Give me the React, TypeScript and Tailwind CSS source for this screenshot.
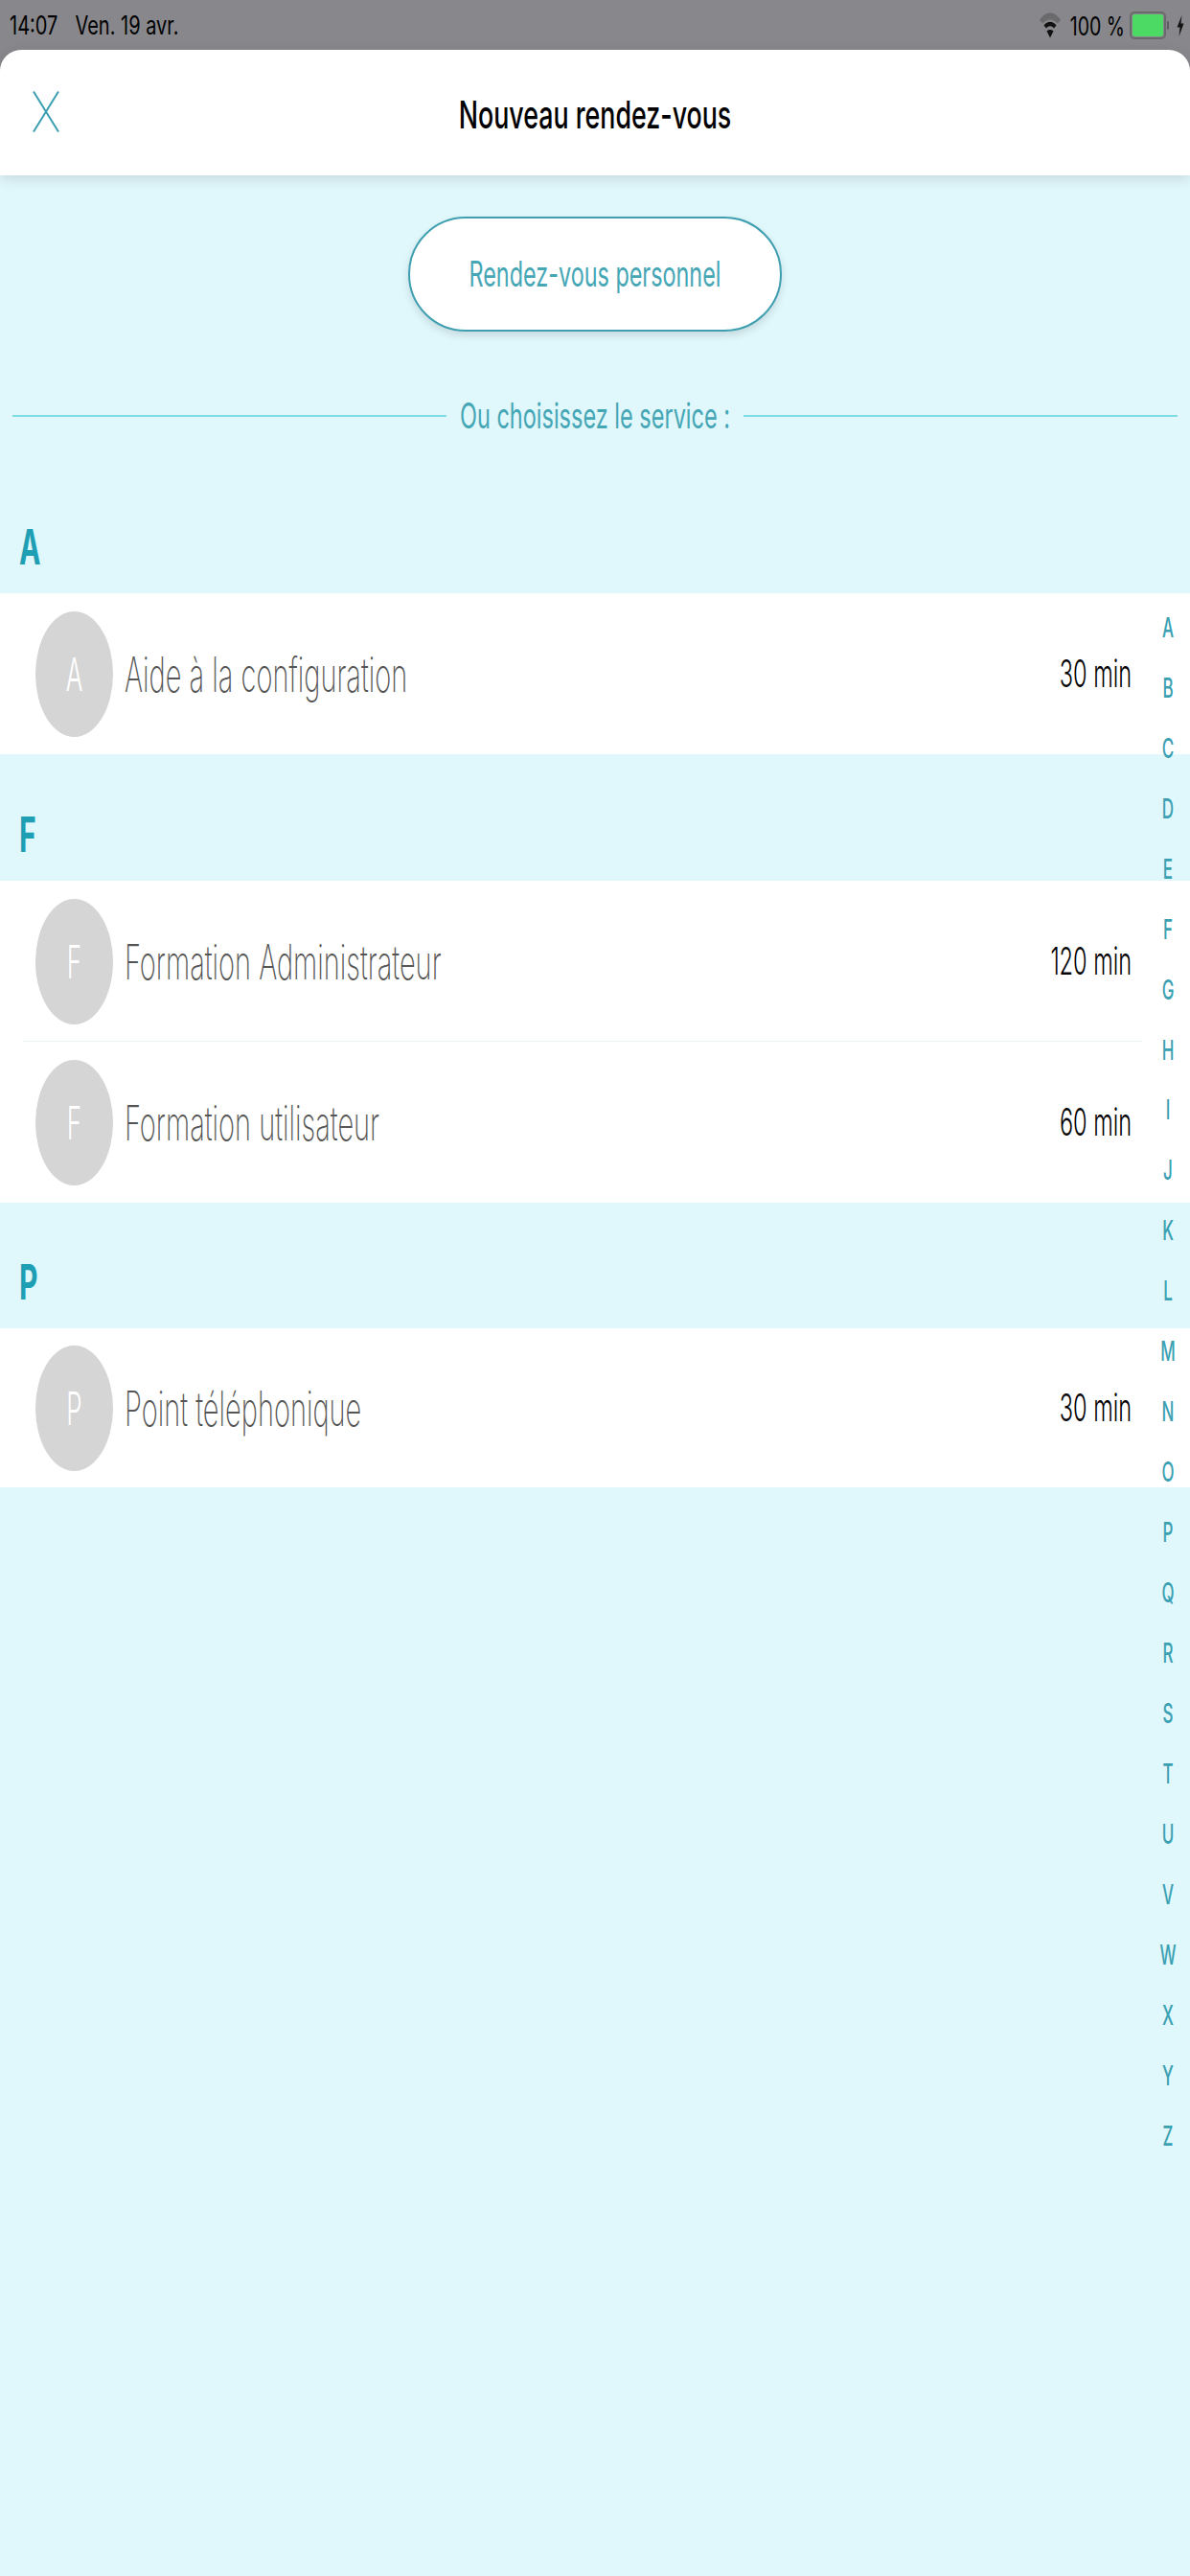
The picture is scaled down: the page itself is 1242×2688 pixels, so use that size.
import React from 'react';

const letters = 'ABCDEFGHIJKLMNOPQRSTUVWXYZ'.split('');

interface Service {
  name: string;
  duration: string;
}

const sections: { letter: string; bandClass: string; rowClass: string; services: Service[] }[] = [
  {
    letter: 'A',
    bandClass: 'h-[132px]',
    rowClass: 'h-[168px]',
    services: [{ name: 'Aide à la configuration', duration: '30 min' }],
  },
  {
    letter: 'F',
    bandClass: 'h-[132px]',
    rowClass: 'h-[168px]',
    services: [
      { name: 'Formation Administrateur', duration: '120 min' },
      { name: 'Formation utilisateur', duration: '60 min' },
    ],
  },
  {
    letter: 'P',
    bandClass: 'h-[131px]',
    rowClass: 'h-[166px]',
    services: [{ name: 'Point téléphonique', duration: '30 min' }],
  },
];

const StatusBar = () => (
  <div className="h-[52px] bg-[#88888c] flex items-start justify-between pl-[10px] pr-[6px] pt-[13px] text-black">
    <div className="flex gap-[18px] text-[20px] leading-[28px] font-['Inter',sans-serif]">
      <span className="inline-block scale-y-[1.35]">14:07</span>
      <span className="inline-block scale-y-[1.35]">Ven. 19 avr.</span>
    </div>
    <div className="flex items-center gap-[5px] -mt-[1px]">
      <svg width="24" height="27" viewBox="0 0 24 27" className="mr-[4px]">
        <path d="M1 8C7-2 17-2 23 8L19.500 11.500C15 6 9 6 4.500 11.500Z" fill="#6a6a6d" />
        <path d="M5.500 13.500C9.500 8.500 14.500 8.500 18.500 13.500L16 16.500C13.500 13.500 10.500 13.500 8 16.500Z" fill="#111" />
        <path d="M8.500 19.500C10.500 17.500 13.500 17.500 15.500 19.500L12 26.500Z" fill="#111" />
      </svg>
      <span className="inline-block text-[19.500px] leading-[28px] font-['Inter',sans-serif] scale-y-[1.38]">100 %</span>
      <div className="relative w-[38px] h-[29px] rounded-[5px] border-2 border-[#69696c] p-[1px]">
        <div className="w-full h-full rounded-[3px] bg-[#4cd964]" />
        <div className="absolute -right-[5px] top-[8px] w-[2px] h-[9px] rounded-r-[2px] bg-[#5d5d60]" />
      </div>
      <svg width="8" height="24" viewBox="0 0 8 24" className="ml-[6px]">
        <path d="M5.500 1L0.500 13.500H3.500L2.500 23L7.500 9.500H4.500Z" fill="#111" />
      </svg>
    </div>
  </div>
);

const Header = () => (
  <div className="relative z-10 h-[131px] bg-white rounded-t-[22px] shadow-[0_4px_14px_rgba(0,0,0,0.12)] flex items-center justify-center">
    <svg width="28" height="43" viewBox="0 0 28 43" className="absolute left-[34px] top-[43px]">
      <path d="M1 0.500L27 42.500M27 0.500L1 42.500" stroke="#3b9fb1" strokeWidth="2" fill="none" />
    </svg>
    <span className="inline-block text-[26.800px] font-medium text-black font-['Inter',sans-serif] scale-y-[1.5] translate-y-[2px]">
      Nouveau rendez-vous
    </span>
  </div>
);

const ServiceRow = ({ service, letter, last, rowClass }: { service: Service; letter: string; last: boolean; rowClass: string }) => (
  <div className={`relative ${rowClass} bg-white flex items-center pl-[37px] pr-[61px]`}>
    <div className="w-[81px] h-[131px] rounded-[50%] bg-[#d5d5d5] flex items-center justify-center shrink-0">
      <span className="inline-block text-[26px] font-light text-white font-['Inter',sans-serif] scale-y-[1.85]">{letter}</span>
    </div>
    <span className="ml-[12px] inline-block text-[29px] font-extralight text-[#555] font-['Inter',sans-serif] scale-y-[1.72] translate-y-[2px]">
      {service.name}
    </span>
    <span className="ml-auto inline-block text-[23.500px] font-light text-black font-['Inter',sans-serif] scale-y-[1.68]">
      {service.duration}
    </span>
    {!last && <div className="absolute left-[24px] right-[49px] bottom-0 h-[1px] bg-[#eef5f8]" />}
  </div>
);

export default function App() {
  return (
    <div className="relative w-[1242px] h-[2688px] overflow-hidden bg-[#88888c] antialiased">
      <StatusBar />
      <Header />
      <div className="h-[2505px] bg-[#e0f7fb]">
        <div className="flex justify-center pt-[43px]">
          <div className="w-[390px] h-[120px] rounded-[60px] bg-white border-2 border-[#3f9fb0] shadow-[0_4px_8px_rgba(0,0,0,0.12)] flex items-center justify-center">
            <span className="inline-block text-[23.400px] text-[#45a6b5] font-['Inter',sans-serif] font-normal scale-y-[1.55]">
              Rendez-vous personnel
            </span>
          </div>
        </div>
        <div className="mt-[73px] mb-[38px] h-[30px] flex items-center pl-[13px] pr-[13px]">
          <div className="flex-1 h-[2px] bg-[#7fdbe4]" />
          <span className="mx-[14px] inline-block text-[23.500px] text-[#45a6b5] font-['Inter',sans-serif] font-normal scale-y-[1.55]">
            Ou choisissez le service :
          </span>
          <div className="flex-1 h-[2px] bg-[#7fdbe4]" />
        </div>
        {sections.map(section => (
          <div key={section.letter}>
            <div className={`${section.bandClass} flex items-end pl-[20px] pb-[29px]`}>
              <span className="inline-block h-[40px] leading-[40px] text-[30px] font-bold text-[#1f9fb3] font-['Inter',sans-serif] scale-y-[1.7]">
                {section.letter}
              </span>
            </div>
            {section.services.map((service, i) => (
              <ServiceRow
                key={service.name}
                service={service}
                letter={section.letter}
                rowClass={section.rowClass}
                last={i === section.services.length - 1}
              />
            ))}
          </div>
        ))}
      </div>
      {/* Alphabet index, lies over the rows */}
      <div className="absolute right-[3px] top-[625px] w-[40px] flex flex-col items-center">
        {letters.map(l => (
          <div key={l} className="h-[62.970px] flex items-center justify-center">
            <span className="inline-block text-[17px] font-medium text-[#3aa0b2] font-['Inter',sans-serif] scale-y-[1.65]">{l}</span>
          </div>
        ))}
      </div>
    </div>
  );
}
